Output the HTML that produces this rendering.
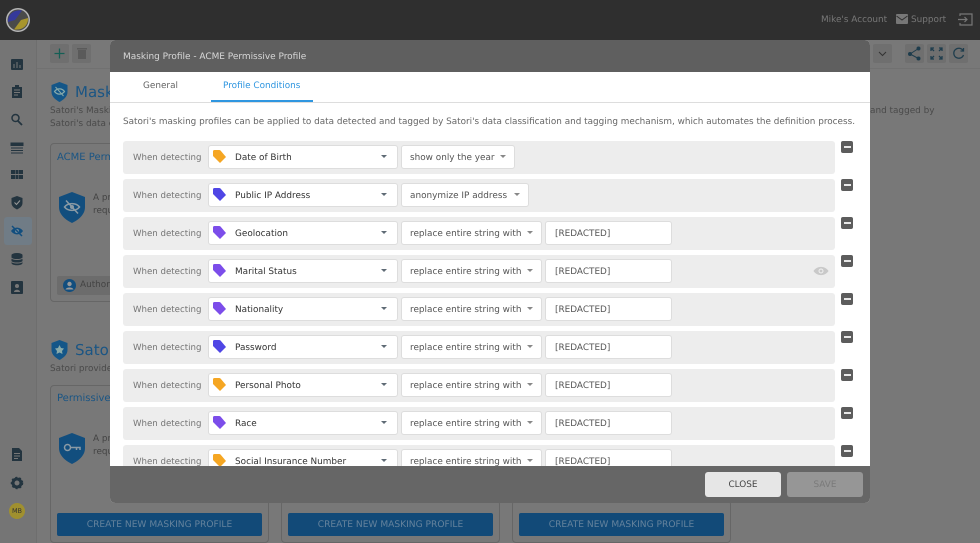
<!DOCTYPE html>
<html><head><meta charset="utf-8"><style>
*{box-sizing:border-box}
html,body{margin:0;padding:0}
body{width:980px;height:543px;overflow:hidden;position:relative;background:#787878;font-family:"DejaVu Sans",sans-serif;font-size:8.9px;color:#555;text-rendering:geometricPrecision}
.a{position:absolute}
.t{position:absolute;white-space:nowrap}
.top{left:0;top:0;width:980px;height:40px;background:#2f2f2f}
.side{left:0;top:40px;width:37px;height:503px;background:#757575;border-right:1px solid #6e6e6e}
.tb{left:37px;top:40px;width:943px;height:29px;border-bottom:1px solid #717171;background:#787878}
.btn{position:absolute;top:44px;width:19px;height:19px;background:#6f6f6f;border-radius:2px}
.card{position:absolute;border:1px solid #666;border-radius:4px}
.create{position:absolute;top:513px;width:205px;height:23px;background:#124a78;border-radius:2px;color:#64829c;font-size:9.1px;text-align:center;line-height:25px}
.modal{left:110px;top:40px;width:760px;height:463px;background:#fff;border-radius:5px;overflow:hidden}
.mh{left:0;top:0;width:760px;height:32px;background:#5f5f5f;color:#d8d8d8;line-height:34px;padding-left:13px;font-size:8.95px}
.mf{left:0;top:426px;width:760px;height:37px;background:#666}
.row{position:absolute;left:13px;width:712px;height:33px;background:#ededed;border-radius:3px}
.lb{position:absolute;left:10px;top:11px;color:#757575;font-size:8.65px;line-height:12px;white-space:nowrap}
.sel{position:absolute;top:4px;height:24px;background:#fff;border:1px solid #ddd;border-radius:3px;line-height:24px;color:#333;font-size:8.9px;white-space:nowrap}
.s1{left:85px;width:190px;padding-left:26px}
.s2{left:278px;padding-left:8px;color:#555;font-size:8.9px}
.s3{left:422px;width:127px;padding-left:9px;color:#555}
.car{position:absolute;top:9px;width:0;height:0;border-left:3.5px solid transparent;border-right:3.5px solid transparent;border-top:3.5px solid #5f6b75}
.car2{border-top-color:#888}
.min{position:absolute;left:731px;width:12px;height:12px;background:#5c5c5c;border-radius:2px}
.min:after{content:"";position:absolute;left:2.5px;top:5px;width:7px;height:2px;background:#e8e8e8}
.tag{position:absolute;left:3px;top:3px}
</style></head><body>
<div class="a top"></div>
<svg class="a" style="left:5px;top:7px" width="26" height="26" viewBox="0 0 26 26"><circle cx="13" cy="13" r="12" fill="#b5b5b5"/><circle cx="13" cy="13" r="10.500" fill="#4a4a4a"/><path d="M3 15C2.500 8 8 2.500 17 3.500L10 13Z" fill="#35399a"/><path d="M23 11C23.500 18 18 23.500 9 22.500L16 13Z" fill="#a8952d"/></svg>
<div class="t" style="left:821px;top:15px;color:#777">Mike's Account</div>
<svg class="a" style="left:896px;top:14px" width="13" height="11"><rect width="12" height="10" rx="1" fill="#777"/><path d="M0.500 2L6 6L11.500 2" stroke="#2f2f2f" fill="none"/></svg>
<div class="t" style="left:911px;top:15px;color:#777">Support</div>
<svg class="a" style="left:957px;top:13px" width="16" height="13" fill="none" stroke="#777" stroke-width="1.2"><path d="M3 3V1H15V12H3V10M1 6.500H10M7.500 4L10 6.500L7.500 9"/></svg>

<div class="a side"></div>
<div class="a tb"></div>
<div class="btn" style="left:50px"></div><svg class="a" style="left:54px;top:48px" width="11" height="11" stroke="#155f55" stroke-width="1.300"><path d="M5.500 .5V10.500M.5 5.500H10.500"/></svg>
<div class="btn" style="left:72px"></div>
<svg class="a" style="left:77px;top:47px" width="10" height="12"><path d="M1 3H9V12H1ZM0 1H10V2.500H0Z" fill="#5a5a5a"/></svg>
<div class="btn" style="left:873px"></div>
<svg class="a" style="left:878px;top:51px" width="9" height="6" fill="none" stroke="#333"><path d="M1 1L4.500 4.500L8 1"/></svg>
<div class="btn" style="left:905px"></div><div class="btn" style="left:927px"></div><div class="btn" style="left:949px"></div>
<svg class="a" style="left:907px;top:46px" width="15" height="15" fill="#1f3d4d" stroke="#1f3d4d"><circle cx="3" cy="8" r="1.500"/><circle cx="11.500" cy="2.500" r="1.500"/><circle cx="11.500" cy="12.500" r="1.500"/><path d="M3 8L11.500 2.500M3 8L11.500 12.500"/></svg>
<svg class="a" style="left:930px;top:47px" width="13" height="13" fill="none" stroke="#1f3d4d" stroke-width="1.300"><path d="M1 4V1H4M9 1H12V4M1 9V12H4M12 9V12H9M1 1L4 4M12 1L9 4M1 12L4 9M12 12L9 9"/></svg>
<svg class="a" style="left:952px;top:47px" width="13" height="13" fill="none" stroke="#1f3d4d" stroke-width="1.300"><path d="M11 3.500A5 5 0 1 0 11.500 8M11.500 1V4H8.500"/></svg>

<div class="a" style="left:4px;top:217px;width:28px;height:28px;background:#6b8294;border-radius:3px;opacity:.55"></div>
<svg class="a" style="left:0;top:40px" width="36" height="260" fill="#23343f">
<rect x="11" y="19" width="12" height="11" rx="1"/><path d="M14 28V24M17 28V22M20 28V25" stroke="#777"/>
<path d="M12 47H15V45H19V47H22V58H12Z"/><path d="M14 50H20M14 52.500H20M14 55H18" stroke="#777"/>
<circle cx="15.500" cy="78" r="3.500" fill="none" stroke="#23343f" stroke-width="1.500"/><path d="M18 81L22 85" stroke="#23343f" stroke-width="1.800"/>
<path d="M11 103H23V105.500H11ZM11 108H23M11 110.500H23M11 113H23" stroke="#23343f"/>
<path d="M11 130H15V134H11ZM15.500 130H18.500V134H15.500ZM19 130H23V134H19ZM11 135H15V139H11ZM15.500 135H18.500V139H15.500ZM19 135H23V139H19Z"/>
<path d="M17 156L22.500 158V163C22.500 166 20 168 17 169.500C14 168 11.500 166 11.500 163V158Z"/><path d="M14.500 162.500L16.500 164.500L20 160.500" stroke="#999" fill="none"/>
<path d="M11 191C14 186.500 20 186.500 23 191C20 195.500 14 195.500 11 191Z" fill="#124e7e"/><circle cx="17" cy="191" r="2" fill="#6f8798"/><path d="M12 186L22 196" stroke="#124e7e" stroke-width="1.500"/>
<ellipse cx="17" cy="215" rx="5.500" ry="2"/><path d="M11.500 215V223C11.500 226 22.500 226 22.500 223V215Z"/><path d="M11.500 218C13 220 21 220 22.500 218M11.500 221.500C13 223.500 21 223.500 22.500 221.500" stroke="#777" fill="none"/>
<rect x="11" y="241" width="12" height="13" rx="1"/><circle cx="17" cy="246" r="2" fill="#777"/><path d="M14 252C14 249 20 249 20 252Z" fill="#777"/>
</svg>
<svg class="a" style="left:0;top:445px" width="36" height="60" fill="#23343f">
<path d="M12 3H19L22 6V16H12Z"/><path d="M14 8.500H20M14 11H20M14 13.500H18" stroke="#777"/>
<circle cx="17" cy="38" r="4" fill="none" stroke="#23343f" stroke-width="3"/><circle cx="17" cy="38" r="5.500" fill="none" stroke="#23343f" stroke-width="1.500" stroke-dasharray="2 2"/>
</svg>
<div class="a" style="left:9px;top:503px;width:16px;height:16px;border-radius:50%;background:#a0902f;color:#333;font-size:6.500px;line-height:16px;text-align:center">MB</div>

<svg class="a" style="left:51px;top:82px" width="17" height="20"><path d="M8.500 0L16.500 3V10C16.500 15 12 18 8.500 20C5 18 .5 15 .5 10V3Z" fill="#145688"/><path d="M3.500 9.500C6 6 11 6 13.500 9.500C11 13 6 13 3.500 9.500Z" fill="none" stroke="#8aa" stroke-width="1.200"/><path d="M4.500 5L12.500 14" stroke="#8aa"/></svg>
<div class="t" style="left:75px;top:83px;font-size:15px;color:#1a5584">Masking</div>
<div class="t" style="left:50px;top:106px;color:#4a4a4a">Satori's Masking</div>
<div class="t" style="left:50px;top:119px;color:#4a4a4a">Satori's data classification</div>
<div class="t" style="left:870px;top:106px;color:#4a4a4a">and tagged by</div>
<div class="card" style="left:50px;top:143px;width:70px;height:159px"></div>
<div class="t" style="left:57px;top:152px;font-size:10px;color:#1a5584">ACME Permissive</div>
<svg class="a" style="left:59px;top:192px" width="26" height="31"><path d="M13 0L26 5V15C26 23 19 28 13 31C7 28 0 23 0 15V5Z" fill="#124e7e"/><path d="M5.500 15C9 10.500 17 10.500 20.500 15C17 19.500 9 19.500 5.500 15Z" fill="none" stroke="#8a9aa5" stroke-width="1.500"/><circle cx="13" cy="15" r="2" fill="#8a9aa5"/><path d="M7 8.500L19 21.500" stroke="#8a9aa5" stroke-width="1.500"/></svg>
<div class="t" style="left:93px;top:193px;color:#444">A pr</div>
<div class="t" style="left:93px;top:206px;color:#444">requ</div>
<div class="a" style="left:57px;top:276px;width:55px;height:19px;background:#6c6c6c;border-radius:2px"></div>
<svg class="a" style="left:63px;top:279px" width="13" height="13"><circle cx="6.500" cy="6.500" r="6.500" fill="#124e7e"/><circle cx="6.500" cy="5" r="2.200" fill="#999"/><path d="M2.500 10.500C3.500 7.800 9.500 7.800 10.500 10.500Z" fill="#999"/></svg>
<div class="t" style="left:80px;top:280px;color:#444">Author -</div>

<svg class="a" style="left:51px;top:340px" width="17" height="20"><path d="M8.500 0L16.500 3V10C16.500 15 12 18 8.500 20C5 18 .5 15 .5 10V3Z" fill="#145688"/><path d="M8.500 5L10 8L13 8.500L11 11L11.500 14L8.500 12.500L5.500 14L6 11L4 8.500L7 8Z" fill="#8aa"/></svg>
<div class="t" style="left:75px;top:341px;font-size:15px;color:#1a5584">Satori</div>
<div class="t" style="left:50px;top:364px;color:#4a4a4a">Satori provides</div>
<div class="card" style="left:50px;top:385px;width:219px;height:158px"></div>
<div class="card" style="left:281px;top:500px;width:219px;height:43px"></div>
<div class="card" style="left:512px;top:500px;width:219px;height:43px"></div>
<div class="t" style="left:57px;top:393px;font-size:10px;color:#1a5584">Permissive</div>
<svg class="a" style="left:59px;top:433px" width="26" height="31"><path d="M13 0L26 5V15C26 23 19 28 13 31C7 28 0 23 0 15V5Z" fill="#124e7e"/><circle cx="8.500" cy="14.500" r="3" fill="none" stroke="#8a9aa5" stroke-width="1.500"/><path d="M11.500 14.500H21V17M17.500 14.500V17" fill="none" stroke="#8a9aa5" stroke-width="1.500"/></svg>
<div class="t" style="left:93px;top:434px;color:#444">A pr</div>
<div class="t" style="left:93px;top:447px;color:#444">requ</div>
<div class="create" style="left:57px">CREATE NEW MASKING PROFILE</div>
<div class="create" style="left:288px">CREATE NEW MASKING PROFILE</div>
<div class="create" style="left:519px">CREATE NEW MASKING PROFILE</div>

<div class="a modal">
<div class="a mh">Masking Profile - ACME Permissive Profile</div>
<div class="a" style="left:0;top:62px;width:760px;height:1px;background:#ddd"></div>
<div class="t" style="left:33px;top:41px;color:#666">General</div>
<div class="t" style="left:113px;top:41px;color:#2f96e0">Profile Conditions</div>
<div class="a" style="left:101px;top:60px;width:102px;height:2px;background:#2f96e0"></div>
<div class="t" style="left:13px;top:77px;color:#666;font-size:8.85px">Satori's masking profiles can be applied to data detected and tagged by Satori's data classification and tagging mechanism, which automates the definition process.</div>

<div class="row" style="top:101px"><div class="lb">When detecting</div><div class="sel s1"><svg class="tag" width="15" height="15"><path d="M1 2.500Q1 1 2.500 1H7Q8 1 8.500 1.500L14 8L8 14L1 7Z" fill="#f5a623"/></svg>Date of Birth<div class="car" style="left:172px"></div></div><div class="sel s2" style="width:114px">show only the year<div class="car car2" style="left:98px"></div></div></div>
<div class="min" style="top:101px"></div>
<div class="row" style="top:139px"><div class="lb">When detecting</div><div class="sel s1"><svg class="tag" width="15" height="15"><path d="M1 2.500Q1 1 2.500 1H7Q8 1 8.500 1.500L14 8L8 14L1 7Z" fill="#4f46e5"/></svg>Public IP Address<div class="car" style="left:172px"></div></div><div class="sel s2" style="width:128px">anonymize IP address<div class="car car2" style="left:112px"></div></div></div>
<div class="min" style="top:139px"></div>
<div class="row" style="top:177px"><div class="lb">When detecting</div><div class="sel s1"><svg class="tag" width="15" height="15"><path d="M1 2.500Q1 1 2.500 1H7Q8 1 8.500 1.500L14 8L8 14L1 7Z" fill="#7c4dea"/></svg>Geolocation<div class="car" style="left:172px"></div></div><div class="sel s2" style="width:141px">replace entire string with<div class="car car2" style="left:125px"></div></div><div class="sel s3">[REDACTED]</div></div>
<div class="min" style="top:177px"></div>
<div class="row" style="top:215px"><div class="lb">When detecting</div><div class="sel s1"><svg class="tag" width="15" height="15"><path d="M1 2.500Q1 1 2.500 1H7Q8 1 8.500 1.500L14 8L8 14L1 7Z" fill="#7c4dea"/></svg>Marital Status<div class="car" style="left:172px"></div></div><div class="sel s2" style="width:141px">replace entire string with<div class="car car2" style="left:125px"></div></div><div class="sel s3">[REDACTED]</div><svg class="a" style="left:690px;top:10px" width="16" height="12"><path d="M.5 6C4 .5 12 .5 15.500 6C12 11.500 4 11.500 .5 6Z" fill="#c9c9c9"/><circle cx="8" cy="6" r="2.500" fill="#ededed"/><circle cx="8" cy="6" r="1.400" fill="#c9c9c9"/></svg></div>
<div class="min" style="top:215px"></div>
<div class="row" style="top:253px"><div class="lb">When detecting</div><div class="sel s1"><svg class="tag" width="15" height="15"><path d="M1 2.500Q1 1 2.500 1H7Q8 1 8.500 1.500L14 8L8 14L1 7Z" fill="#7c4dea"/></svg>Nationality<div class="car" style="left:172px"></div></div><div class="sel s2" style="width:141px">replace entire string with<div class="car car2" style="left:125px"></div></div><div class="sel s3">[REDACTED]</div></div>
<div class="min" style="top:253px"></div>
<div class="row" style="top:291px"><div class="lb">When detecting</div><div class="sel s1"><svg class="tag" width="15" height="15"><path d="M1 2.500Q1 1 2.500 1H7Q8 1 8.500 1.500L14 8L8 14L1 7Z" fill="#4f46e5"/></svg>Password<div class="car" style="left:172px"></div></div><div class="sel s2" style="width:141px">replace entire string with<div class="car car2" style="left:125px"></div></div><div class="sel s3">[REDACTED]</div></div>
<div class="min" style="top:291px"></div>
<div class="row" style="top:329px"><div class="lb">When detecting</div><div class="sel s1"><svg class="tag" width="15" height="15"><path d="M1 2.500Q1 1 2.500 1H7Q8 1 8.500 1.500L14 8L8 14L1 7Z" fill="#f5a623"/></svg>Personal Photo<div class="car" style="left:172px"></div></div><div class="sel s2" style="width:141px">replace entire string with<div class="car car2" style="left:125px"></div></div><div class="sel s3">[REDACTED]</div></div>
<div class="min" style="top:329px"></div>
<div class="row" style="top:367px"><div class="lb">When detecting</div><div class="sel s1"><svg class="tag" width="15" height="15"><path d="M1 2.500Q1 1 2.500 1H7Q8 1 8.500 1.500L14 8L8 14L1 7Z" fill="#7c4dea"/></svg>Race<div class="car" style="left:172px"></div></div><div class="sel s2" style="width:141px">replace entire string with<div class="car car2" style="left:125px"></div></div><div class="sel s3">[REDACTED]</div></div>
<div class="min" style="top:367px"></div>
<div class="row" style="top:405px"><div class="lb">When detecting</div><div class="sel s1"><svg class="tag" width="15" height="15"><path d="M1 2.500Q1 1 2.500 1H7Q8 1 8.500 1.500L14 8L8 14L1 7Z" fill="#f5a623"/></svg>Social Insurance Number<div class="car" style="left:172px"></div></div><div class="sel s2" style="width:141px">replace entire string with<div class="car car2" style="left:125px"></div></div><div class="sel s3">[REDACTED]</div></div>
<div class="min" style="top:405px"></div>

<div class="a mf"></div>
<div class="a" style="left:595px;top:432px;width:76px;height:25px;background:#e6e6e6;border-radius:3px;color:#444;text-align:center;line-height:26px">CLOSE</div>
<div class="a" style="left:677px;top:432px;width:76px;height:25px;background:#969696;border-radius:3px;color:#7a7a7a;text-align:center;line-height:26px">SAVE</div>
</div>
</body></html>
